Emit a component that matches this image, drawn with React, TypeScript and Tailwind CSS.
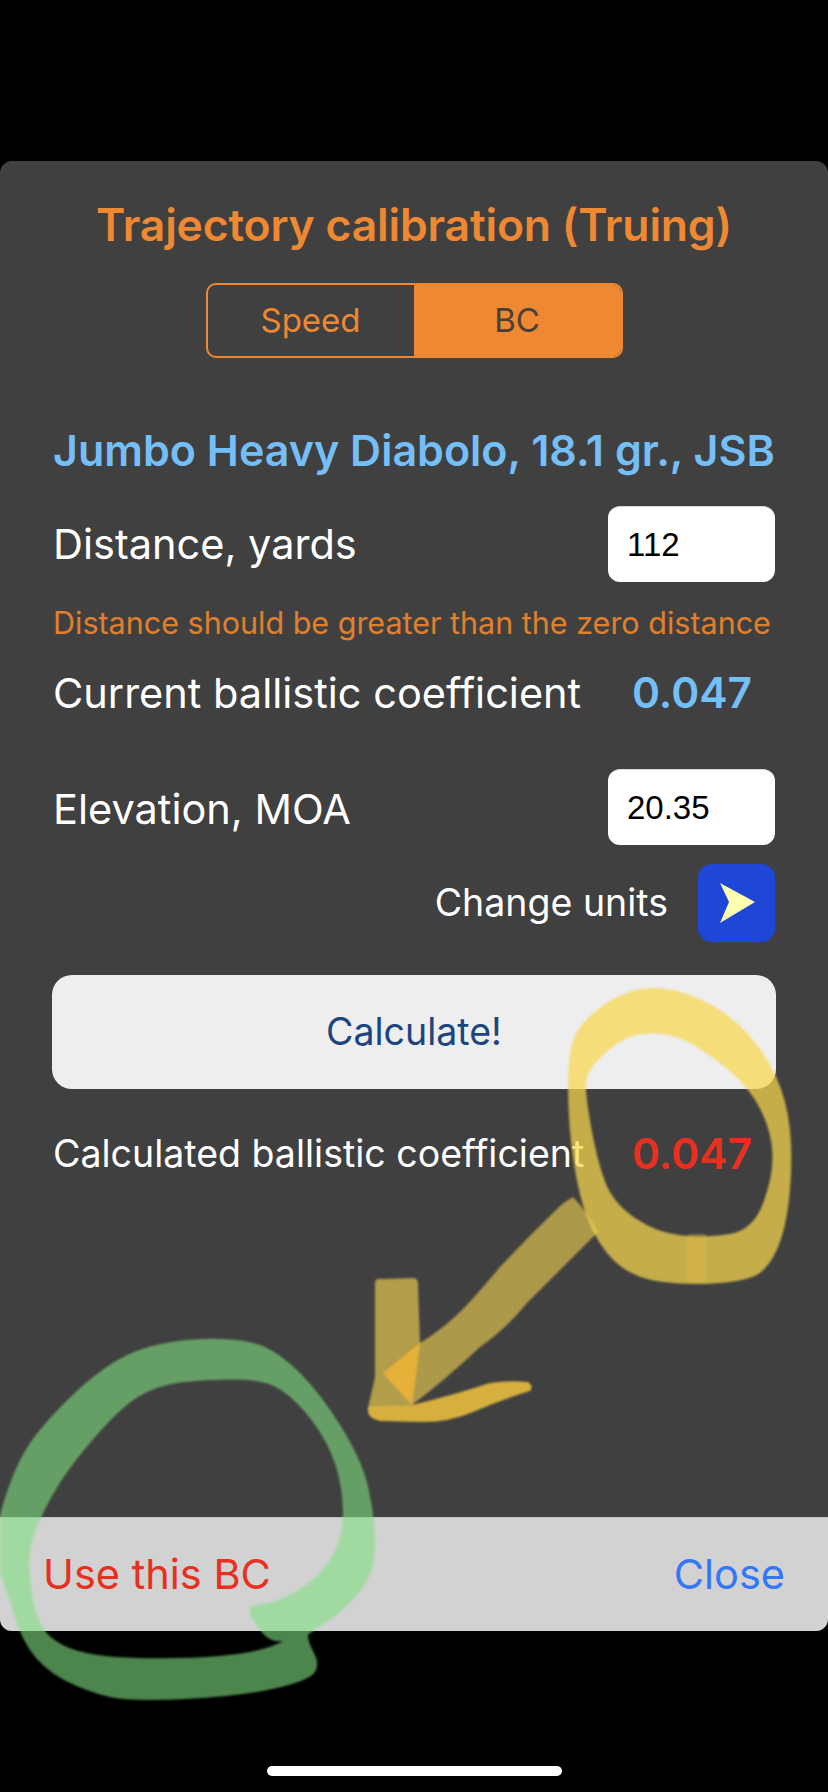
// Calibration dialog with hand-drawn marker annotations on top
const font = { sans: "font-['Inter',sans-serif]" };

// closed smooth path through the midpoints of a point list
function smooth(points: number[][]) {
  const mid = (a: number[], b: number[]) => [(a[0] + b[0]) / 2, (a[1] + b[1]) / 2];
  const start = mid(points[points.length - 1], points[0]);
  let d = `M${start[0]} ${start[1]}`;
  points.forEach((p, i) => {
    const m = mid(p, points[(i + 1) % points.length]);
    d += ` Q${p[0]} ${p[1]} ${m[0]} ${m[1]}`;
  });
  return d + " Z";
}

const circleOuter = [[630, 988], [676, 988], [726, 1011], [764, 1051], [787, 1100], [793, 1160], [786, 1230], [767, 1271], [740, 1282], [687, 1285], [638, 1279], [605, 1255], [581, 1207], [568, 1127], [568, 1045], [588, 1015]];
const circleInner = [[640, 1033], [673, 1034], [707, 1052], [750, 1088], [772, 1133], [773, 1177], [753, 1230], [707, 1238], [657, 1233], [613, 1203], [597, 1160], [585, 1093], [587, 1070], [617, 1042]];

const greenRing = [[250, 1340], [282, 1355], [320, 1393], [362, 1460], [375, 1517], [375, 1572], [345, 1610], [311, 1632], [306, 1637], [322, 1669], [298, 1684], [232, 1697], [137, 1701], [100, 1696], [51, 1675], [22, 1642], [6, 1587], [-6, 1560], [-2, 1517], [19, 1458], [46, 1421], [93, 1375], [137, 1348], [195, 1338]];
const greenInner = [[266, 1380], [209, 1379], [158, 1385], [121, 1407], [69, 1467], [42, 1513], [28, 1550], [31, 1597], [44, 1637], [90, 1657], [185, 1659], [253, 1653], [288, 1640], [272, 1642], [259, 1630], [245, 1606], [275, 1603], [317, 1580], [343, 1540], [343, 1487], [327, 1440], [296, 1400]];

function Marks() {
  return (
    <svg className="absolute inset-0 pointer-events-none blur-[0.8px]" width="828" height="1792" viewBox="0 0 828 1792">
      <path d={smooth(circleOuter) + " " + smooth(circleInner)} fill="#f8d74e" fillOpacity="0.72" fillRule="evenodd" />
      <rect x="687" y="1234" width="20" height="48" rx="4" fill="#e0b848" fillOpacity="0.4" />
      <path d="M573 1197 Q586 1210 598 1232 Q560 1270 527 1303 Q505 1330 480 1347 Q445 1380 412 1405 L383 1373 L420 1343 Q445 1328 467 1305 Q485 1285 500 1267 Q525 1240 553 1213 Q562 1203 573 1197 Z" fill="#f0d050" fillOpacity="0.62" />
      <path d="M375 1282 Q376 1278 382 1279 L414 1278 Q418 1279 418 1284 L420 1343 L412 1405 L368 1408 L375 1377 Z" fill="#f0d050" fillOpacity="0.65" />
      <path d="M412 1405 Q450 1396 490 1383 Q510 1380 528 1382 Q534 1386 530 1391 Q500 1400 473 1412 Q450 1422 423 1422 L380 1421 Q366 1418 368 1407 Z" fill="#f8c840" fillOpacity="0.82" />
      <path d="M420 1343 L383 1373 L412 1405 Z" fill="#e8ae36" fillOpacity="0.9" />
      <path d={smooth(greenRing) + " " + smooth(greenInner)} fill="#80e080" fillOpacity="0.6" fillRule="evenodd" />
    </svg>
  );
}

function ValueBox({ value }: { value: string }) {
  return (
    <div className="w-[167px] h-[76px] shrink-0 rounded-xl bg-white flex items-center pl-[19px] font-['Liberation_Sans',sans-serif] text-[33px] text-black border-t border-gray-300">
      {value}
    </div>
  );
}

export default function App() {
  return (
    <div className={`relative w-[828px] h-[1792px] overflow-hidden bg-black pt-[161px] ${font.sans}`}>
      <div className="h-[1470px] rounded-xl bg-[#404040] flex flex-col overflow-hidden">
        <div className="flex-1 px-[53px]">
          <h1 className="mt-[38px] h-[52px] leading-[52px] text-center text-[44.5px] font-semibold tracking-[-0.2px] text-[#ee8833] whitespace-nowrap">
            Trajectory calibration (Truing)
          </h1>

          <div className="mt-[32px] mx-auto w-[417px] h-[75px] flex rounded-[10px] border-2 border-[#ee8833] overflow-hidden text-[33px]">
            <div className="w-[206px] flex items-center justify-center text-[#ee8833]">Speed</div>
            <div className="flex-1 flex items-center justify-center bg-[#ee8833] text-[#4a4038]">BC</div>
          </div>

          <div className="mt-[67px] h-[50px] leading-[50px] text-[43px] font-semibold text-[#74bff8] whitespace-nowrap">
            Jumbo Heavy Diabolo, 18.1 gr., JSB
          </div>

          <div className="mt-[31px] flex items-center justify-between">
            <span className="text-[41.5px] leading-[50px] text-white">Distance, yards</span>
            <ValueBox value="112" />
          </div>

          <div className="mt-[22px] h-[38px] leading-[38px] text-[30.5px] text-[#e0802c] whitespace-nowrap">
            Distance should be greater than the zero distance
          </div>

          <div className="mt-[26px] h-[50px] flex items-center justify-between">
            <span className="text-[41.5px] text-white whitespace-nowrap">Current ballistic coefficient</span>
            <span className="mr-[23px] text-[42.5px] font-semibold text-[#74bff8]">0.047</span>
          </div>

          <div className="mt-[51px] flex items-center justify-between">
            <span className="mt-[4px] text-[41.5px] leading-[50px] text-white">Elevation, MOA</span>
            <ValueBox value="20.35" />
          </div>

          <div className="mt-[19px] flex items-center justify-end gap-[30px]">
            <span className="text-[37.5px] text-white">Change units</span>
            <div className="w-[77px] h-[78px] rounded-[14px] bg-[#1e47d8] flex items-center justify-center">
              <svg width="38" height="40" viewBox="0 0 38 40">
                <path d="M2 0 L37 19 L2 40 L11 19 Z" fill="#fdfdb0" />
              </svg>
            </div>
          </div>

          <button className="mt-[33px] w-[724px] -ml-px h-[114px] rounded-[20px] bg-[#eeeeee] text-[37.5px] text-[#1c4480]">
            Calculate!
          </button>

          <div className="mt-[40px] h-[50px] flex items-center justify-between">
            <span className="text-[37.5px] text-white whitespace-nowrap">Calculated ballistic coefficient</span>
            <span className="mr-[23px] text-[42.5px] font-semibold text-[#e83020]">0.047</span>
          </div>
        </div>

        <div className="h-[114px] shrink-0 bg-[#d2d2d2] border-t border-[#c4c4c4] flex items-center justify-between pl-[43px] pr-[43px] text-[41.5px]">
          <button className="text-[#e83020]">Use this BC</button>
          <button className="text-[#3478f6]">Close</button>
        </div>
      </div>

      <Marks />

      <div className="absolute left-[267px] bottom-[16px] w-[295px] h-[10px] rounded-full bg-white" />
    </div>
  );
}
